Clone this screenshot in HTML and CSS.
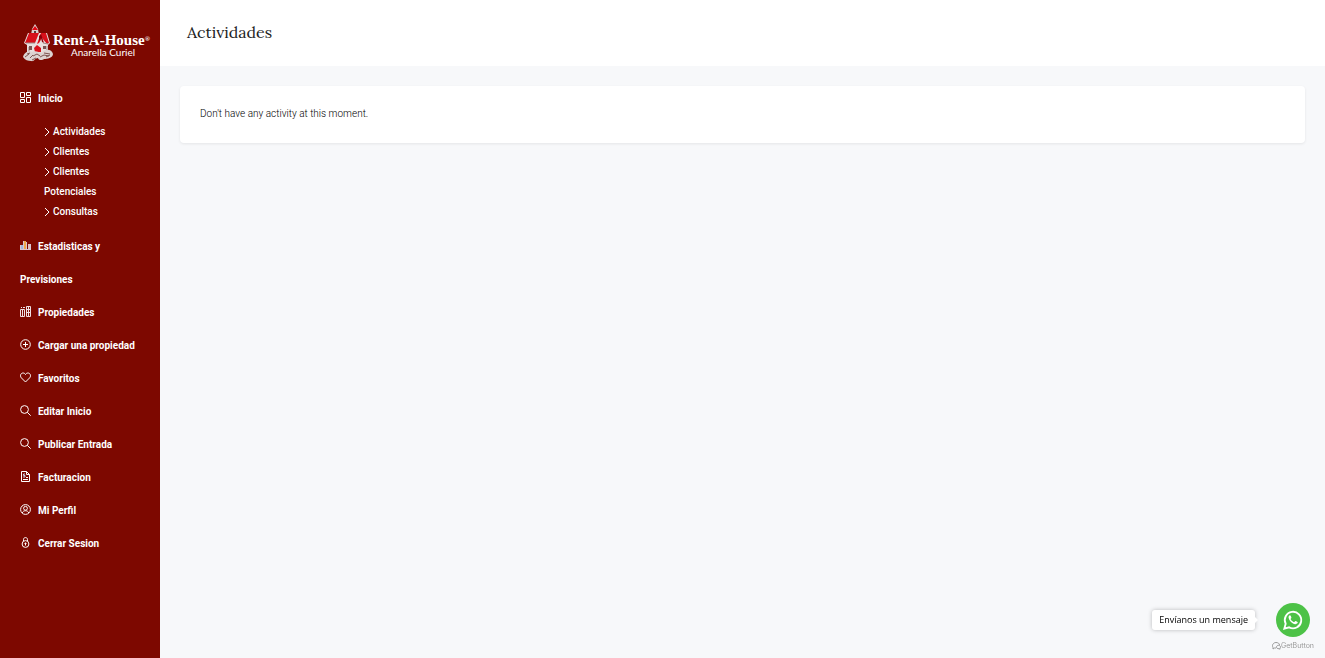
FILE: index.html
```html
<!DOCTYPE html>
<html lang="es">
<head>
  <meta charset="UTF-8" />
  <meta name="viewport" content="width=device-width, initial-scale=1.0"/>
  <title>Actividades | Rent-A-House</title>
  <link rel="stylesheet" href="styles.css">
</head>
<body>
  <aside class="sidebar">
    <a href="#" class="logo">
      <svg class="logo-house" viewBox="0 0 30 38" aria-hidden="true">
        <path d="M8 11l1-6 3-5 3 5 1 6z" fill="#d9cfcd"/>
        <path d="M9 6l3-4 3 4z" fill="#e30613"/>
        <path d="M11 7h2v3h-2z" fill="#5a3a38"/>
        <path d="M5 9h19l3 10-2 2v9H4v-9l-3-2z" fill="#e8e0de"/>
        <path d="M6 9h10l-4 10H2zM18 9h5l3 10-2 1-5-6-3 5-2 1z" fill="#d8101a"/>
        <path d="M16 12l2-2 3 9-2-1-1-4-2 3z" fill="#8a0008"/>
        <path d="M3 19h9M20 19l5 1M6 28v-5M24 22v6" fill="none" stroke="#a08a87"/>
        <path d="M11 24l3-3 4 3v4h-6z" fill="#d8101a"/>
        <path d="M6 22h3v4H6zM20 22h3v3h-3z" fill="#7a5552"/>
        <path d="M0 33c1-4 5-7 9-5 3-2 7 0 10 1 3-5 10-4 11 1 0 4-6 5-9 5-2 2-6 1-6-1-3 0-4 4-7 3-3 0-6-1-8-4z" fill="#ddd3d1"/>
        <path d="M2 33l4-3M7 34l3-3M10 32l4-2 3 2M17 33l4-2 5 1M4 30l3-1M21 29l6 1M13 34l-4 2M23 33l4-2" fill="none" stroke="#7d5450"/>
      </svg>
      <span class="logo-text">
        <strong>Rent-A-House<sup>®</sup></strong>
        <small>Anarella Curiel</small>
      </span>
    </a>

    <nav>
      <ul class="side-menu">
        <li>
          <a href="#"><svg class="icon" viewBox="0 0 11 11"><path d="M.5.5h4v5h-4zM.5 7.500h4v3h-4zM6.500.5h4v3h-4zM6.500 5.500h4v5h-4z"/></svg>Inicio</a>
          <ul class="sub-menu">
            <li><a href="#"><svg class="arrow" viewBox="0 0 6 8"><path d="M1 0l4 4-4 4"/></svg>Actividades</a></li>
            <li><a href="#"><svg class="arrow" viewBox="0 0 6 8"><path d="M1 0l4 4-4 4"/></svg>Clientes</a></li>
            <li><a href="#"><svg class="arrow" viewBox="0 0 6 8"><path d="M1 0l4 4-4 4"/></svg>Clientes Potenciales</a></li>
            <li><a href="#"><svg class="arrow" viewBox="0 0 6 8"><path d="M1 0l4 4-4 4"/></svg>Consultas</a></li>
          </ul>
        </li>
        <li><a href="#"><svg class="icon" viewBox="0 0 11 11"><path d="M1 5h2v5H1z" fill="#9fb8dc" stroke="none"/><path d="M4 1h2v9H4z" fill="#f0a848" stroke="none"/><path d="M8 4h2v6H8z" fill="#e0c0c0" stroke="none"/><path d="M0 9.500h11M.5 5v5M3.500 1v9M6.500 2v8M10.500 4v6" stroke="#d9c6d2"/></svg>Estadisticas y Previsiones</a></li>
        <li><a href="#"><svg class="icon" viewBox="0 0 11 11"><path d="M.5 10.500v-7h4v7zM6.500.5h4v10h-4zM1 1.500h1M3 1.500h2M2.500 4v6M8.500 1v9M7 3.500h3M7 6.500h3" stroke="#efdfe3"/></svg>Propiedades</a></li>
        <li><a href="#"><svg class="icon" viewBox="0 0 11 11"><circle cx="5.500" cy="5.500" r="4.800"/><path d="M5.500 3v5M3 5.500h5"/></svg>Cargar una propiedad</a></li>
        <li><a href="#"><svg class="icon" viewBox="0 0 11 11"><path d="M5.500 10L1.300 5.800C-.5 3.500 1 1 3 1c1.200 0 2 .6 2.500 1.500C6 1.600 6.800 1 8 1c2 0 3.500 2.500 1.700 4.800z"/></svg>Favoritos</a></li>
        <li><a href="#"><svg class="icon" viewBox="0 0 11 11"><circle cx="4.500" cy="4.500" r="3.900"/><path d="M7.300 7.300l3.400 3.400"/></svg>Editar Inicio</a></li>
        <li><a href="#"><svg class="icon" viewBox="0 0 11 11"><circle cx="4.500" cy="4.500" r="3.900"/><path d="M7.300 7.300l3.400 3.400"/></svg>Publicar Entrada</a></li>
        <li><a href="#"><svg class="icon" viewBox="0 0 11 11"><path d="M1.500.5h5l3 3v7h-8zM6.500.5v3h3M3 8.500h5M6 6.500h2"/><path d="M5 3H3.500v1.500H5V6H3" stroke="#c9d3ea"/></svg>Facturacion</a></li>
        <li><a href="#"><svg class="icon" viewBox="0 0 11 11"><circle cx="5.500" cy="5.500" r="4.900"/><circle cx="5.500" cy="4.300" r="1.900"/><path d="M2.300 9c.4-3 6-3 6.400 0"/></svg>Mi Perfil</a></li>
        <li><a href="#"><svg class="icon" viewBox="0 0 11 11"><circle cx="5.500" cy="7" r="3.400"/><path d="M3.500 4V2.500c0-2.600 4-2.600 4 0V4M5.500 5.500v3M4.500 6.500h2"/></svg>Cerrar Sesion</a></li>
      </ul>
    </nav>
  </aside>

  <main class="dashboard">
    <header class="page-header">
      <h1>Actividades</h1>
    </header>
    <section class="content">
      <div class="block">Don't have any activity at this moment.</div>
    </section>
  </main>

  <div class="chat-widget">
    <span class="chat-label">Envíanos un mensaje</span>
    <div class="chat-buttons">
      <a href="#" class="whatsapp" aria-label="WhatsApp">
        <svg viewBox="0 0 24 24"><path d="M2.500 21.500l1.500-5.400A9 9 0 1 1 7.800 20z" fill="none" stroke="#fff" stroke-width="2"/><path d="M8.600 6.800c-.7 0-1.700 1.200-1.400 2.700.6 3.200 4.100 6.600 7.200 7 1.600.2 2.900-1 2.800-2.200 0-.4-2.300-1.500-2.700-1.300-.5.200-.9 1.300-1.300 1.300-1 0-3.700-2.400-3.800-3.400 0-.4.900-.9.900-1.400 0-.4-.8-2.700-1.700-2.700z" fill="#fff"/></svg>
      </a>
      <a href="#" class="getbutton">
        <svg viewBox="0 0 9 8"><path d="M4 6H2.500L1 7V5.500C-.5 3 1.500.5 4 .5c2 0 3.500 1 3.500 2.500M4.500 5c0-2.200 4-2.200 4 0 0 .6-.3 1-.5 1.200v1l-1-.5C5.500 6.900 4.500 6.200 4.500 5z"/></svg>GetButton
      </a>
    </div>
  </div>
</body>
</html>
```
FILE: styles.css
```css
* {
  box-sizing: border-box;
}

body {
  margin: 0;
  min-height: 100vh;
  display: flex;
  font-family: Roboto, "Liberation Sans", sans-serif;
  font-size: 10px;
  background-color: #f7f8fa;
  color: #222222;
}

a {
  color: inherit;
  text-decoration: none;
}

ul {
  list-style: none;
  margin: 0;
  padding: 0;
}

.sidebar {
  width: 160px;
  flex-shrink: 0;
  background-color: #7d0800;
  color: #ffffff;
}

.logo {
  display: flex;
  padding: 24px 0 20px 23px;
}

.logo-house {
  width: 30px;
  height: 38px;
}

.logo-text {
  display: flex;
  flex-direction: column;
  padding-top: 8px;
  white-space: nowrap;
}

.logo-text strong {
  font-family: "Liberation Serif", serif;
  font-size: 15px;
  line-height: 16px;
}

.logo-text sup {
  font-size: 7px;
  line-height: 0;
  vertical-align: 4px;
}

.logo-text small {
  font-family: Lato, sans-serif;
  font-size: 10px;
  line-height: 9px;
  padding-left: 18px;
}

.side-menu {
  padding: 0 20px;
  font-weight: 700;
  line-height: 33px;
}

.icon {
  width: 11px;
  height: 11px;
  margin-right: 7px;
  vertical-align: -1px;
  fill: none;
  stroke: #ffffff;
}

.sub-menu {
  padding: 7px 0 8px 24px;
  font-weight: 500;
  line-height: 20px;
}

.arrow {
  width: 6px;
  height: 8px;
  margin-right: 3px;
  vertical-align: -1px;
  fill: none;
  stroke: #ffffff;
}

.dashboard {
  flex: 1;
}

.page-header {
  background-color: #ffffff;
  padding: 20px 27px 22px;
}

.page-header h1 {
  margin: 0;
  font-family: Lora, "Liberation Serif", serif;
  font-size: 16px;
  font-weight: 400;
  line-height: 24px;
}

.content {
  padding: 20px;
}

.block {
  padding: 18px 20px 19px;
  background-color: #ffffff;
  border-radius: 4px;
  box-shadow: 0 1px 3px rgba(0, 0, 0, 0.08);
  font-weight: 300;
  line-height: 20px;
  color: #000000;
}

.chat-widget {
  position: fixed;
  right: 11px;
  bottom: 8px;
  display: flex;
  align-items: flex-start;
  gap: 17px;
}

.chat-label {
  position: relative;
  margin-top: 7px;
  padding: 0 7px;
  background-color: #ffffff;
  border-radius: 3px;
  box-shadow: 0 0 4px rgba(0, 0, 0, 0.25);
  font-family: "Open Sans", sans-serif;
  font-size: 9px;
  line-height: 20px;
  color: #000000;
}

.chat-label::after {
  content: "";
  position: absolute;
  top: 7px;
  left: 100%;
  border: 3px solid transparent;
  border-left-color: #ffffff;
}

.chat-buttons {
  display: flex;
  flex-direction: column;
  align-items: center;
  gap: 4px;
}

.whatsapp {
  display: flex;
  align-items: center;
  justify-content: center;
  width: 34px;
  height: 34px;
  border-radius: 50%;
  background-color: #4dc247;
}

.whatsapp svg {
  width: 22px;
  height: 22px;
}

.getbutton {
  display: flex;
  align-items: center;
  font-family: Inter, sans-serif;
  font-size: 7px;
  line-height: 9px;
  color: #999999;
}

.getbutton svg {
  width: 9px;
  height: 8px;
  fill: none;
  stroke: #999999;
}
```
